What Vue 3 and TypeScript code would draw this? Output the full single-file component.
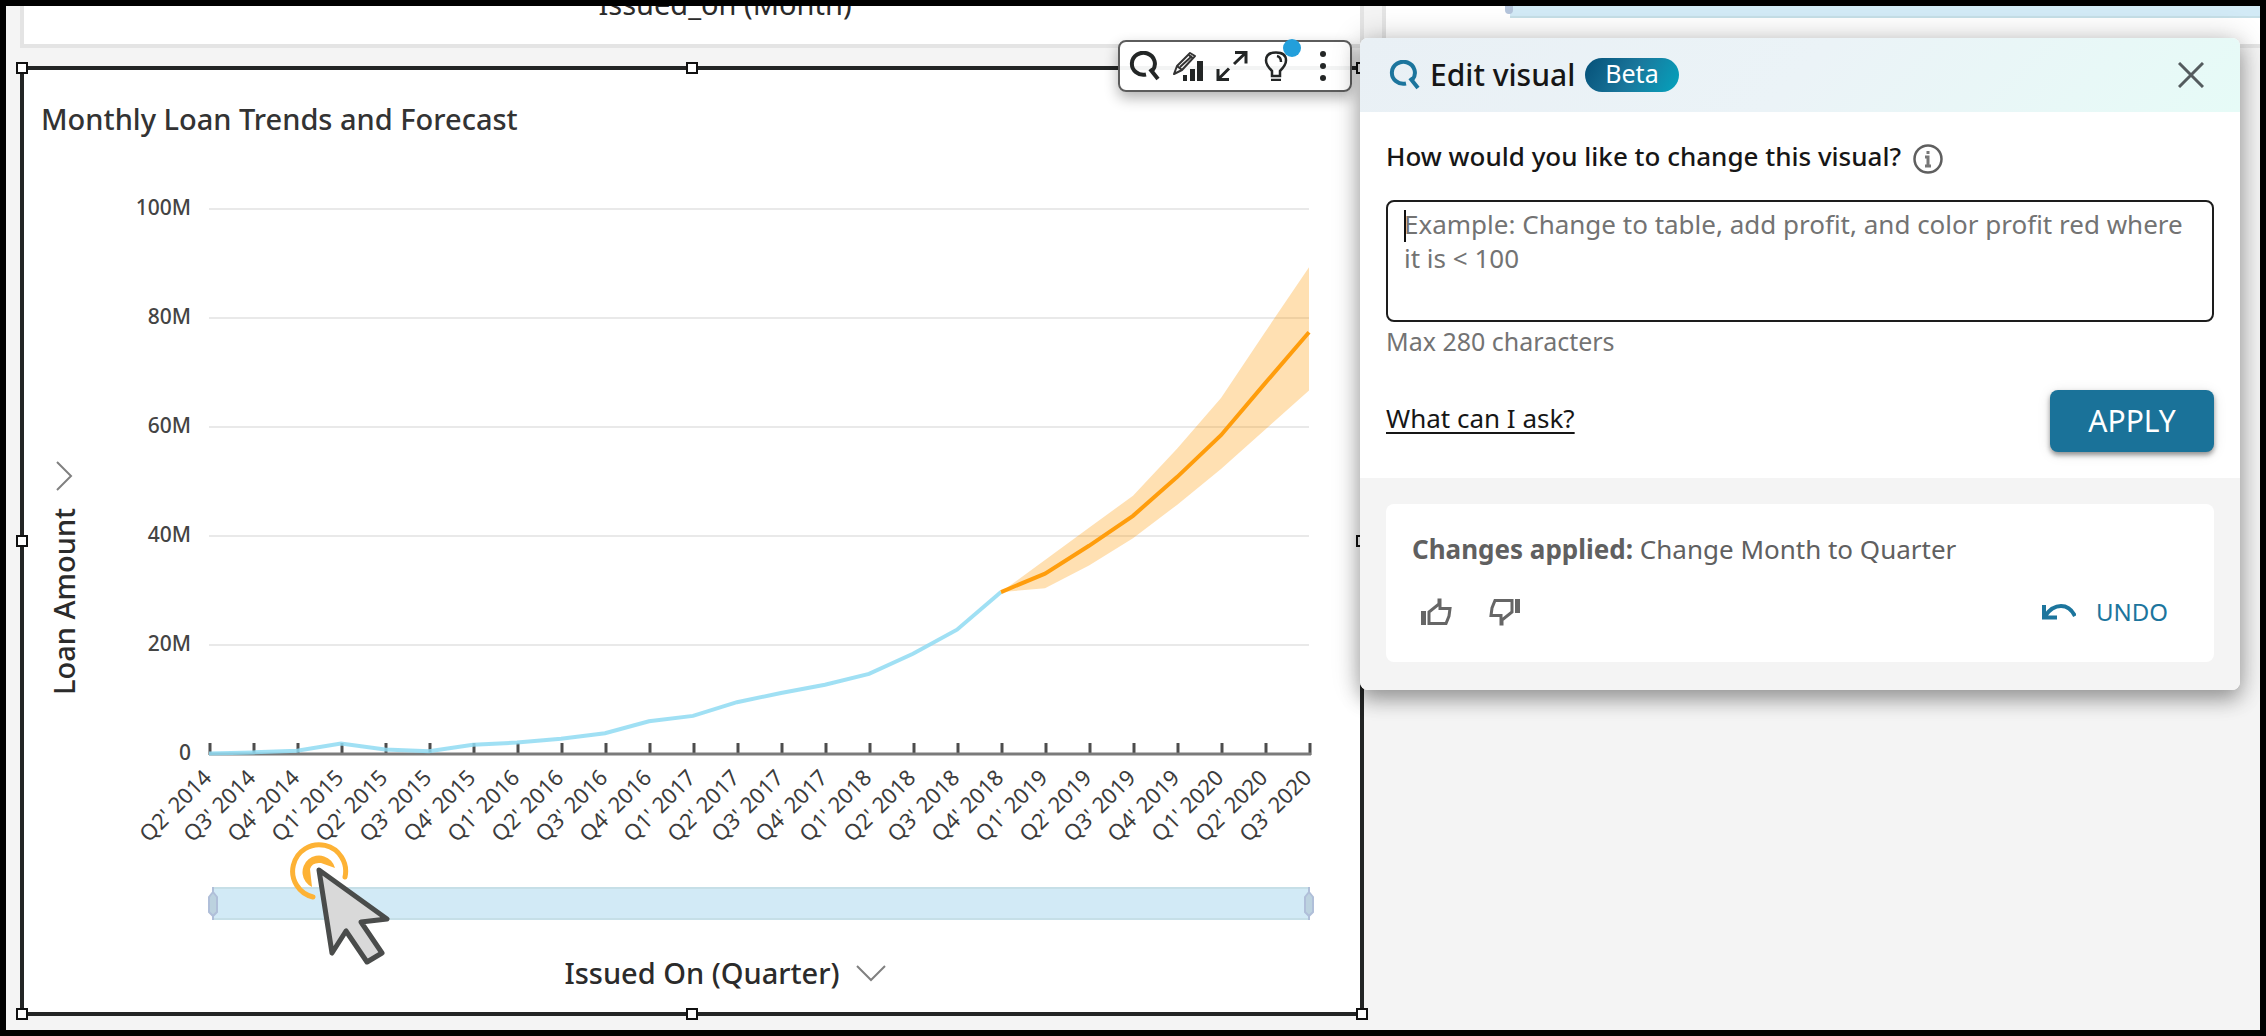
<script setup lang="ts">
import { ref } from 'vue'

interface Point { x: number; y: number }

const AXIS_LEFT = 209
const AXIS_RIGHT = 1309
const AXIS_BOTTOM = 754
const STEP = 44
const PX_PER_MILLION = 5.45

const years = [2014, 2015, 2016, 2017, 2018, 2019, 2020]
const quarters: string[] = years
  .flatMap((year) => [1, 2, 3, 4].map((q) => `Q${q}' ${year}`))
  .slice(1, 27)

const ticks = quarters.map((label, i) => ({ label, x: AXIS_LEFT + i * STEP }))
const grid = [0, 20, 40, 60, 80, 100].map((value) => ({
  label: value === 0 ? '0' : `${value}M`,
  y: AXIS_BOTTOM - value * PX_PER_MILLION,
}))

/* Loan amounts in millions, one per quarter. */
const actual = [0.1, 0.3, 0.6, 1.9, 0.8, 0.5, 1.7, 2.1, 2.8, 3.8, 6, 7, 9.5, 11.2, 12.7, 14.7, 18.4, 22.8, 29.7]
const forecast = [29.7, 33.1, 38.2, 43.7, 50.8, 58.5, 68, 77.4]
const upper = [29.7, 35.6, 41.5, 47.4, 56, 65.3, 77.4, 89.3]
const lower = [29.7, 30.4, 34.6, 39.6, 45.7, 52.3, 59.5, 66.7]
const FORECAST_START = actual.length - 1

function toPoints(values: number[], start: number): Point[] {
  return values.map((v, i) => ({ x: AXIS_LEFT + (start + i) * STEP, y: AXIS_BOTTOM - v * PX_PER_MILLION }))
}
function join(points: Point[]): string {
  return points.map((p) => `${p.x},${p.y.toFixed(1)}`).join(' ')
}

const actualLine = join(toPoints(actual, 0))
const forecastLine = join(toPoints(forecast, FORECAST_START))
const band = join([...toPoints(upper, FORECAST_START), ...toPoints(lower, FORECAST_START).reverse()])

const handles = ['tl', 'tc', 'tr', 'ml', 'mr', 'bl', 'bc', 'br']
const request = ref('')
</script>

<template>
  <main class="sheet">
    <section class="card above-left">
      <span class="axis-title">Issued_on (Month)</span>
    </section>
    <section class="card above-right">
      <div class="range-peek"><i class="range-grip"></i></div>
    </section>

    <section class="visual">
      <h2 class="visual-title">Monthly Loan Trends and Forecast</h2>
      <div class="plot-row">
        <button class="axis-title axis-y" type="button">
          Loan Amount
          <svg class="chev-y" width="18" height="30" viewBox="0 0 18 30" aria-hidden="true">
            <path d="M16 1 2 15l14 14" fill="none" stroke="#808080" stroke-width="2" />
          </svg>
        </button>
        <svg class="plot" viewBox="100 138 1240 798" role="img" aria-label="Loan amount by quarter with forecast">
          <g class="y-label">
            <text v-for="g in grid" :key="g.label" x="191" :y="g.y + 6" text-anchor="end">{{ g.label }}</text>
          </g>
          <g stroke="#e9e9e9" stroke-width="2">
            <line v-for="g in grid.slice(1)" :key="g.label" :x1="AXIS_LEFT" :x2="AXIS_RIGHT" :y1="g.y" :y2="g.y" />
          </g>
          <polygon :points="band" fill="#ff9900" fill-opacity="0.3" />
          <g stroke="#4d4d4d" stroke-width="3">
            <line v-for="t in ticks" :key="t.label" :x1="t.x + 1" :x2="t.x + 1" y1="743" y2="755" />
          </g>
          <line :x1="AXIS_LEFT" :x2="AXIS_RIGHT + 2" y1="754" y2="754" stroke="#7b7b7b" stroke-width="3" />
          <polyline :points="actualLine" fill="none" stroke="#8fdaf2" stroke-opacity="0.85" stroke-width="4" />
          <polyline :points="forecastLine" fill="none" stroke="#ff9d0c" stroke-width="4" />
          <g class="x-label">
            <text
              v-for="t in ticks" :key="t.label" text-anchor="end"
              :transform="`translate(${t.x + 4} 779) rotate(-45)`"
            >{{ t.label }}</text>
          </g>
          <rect x="212" y="887" width="1097" height="33" fill="#d2eaf6" />
          <path d="M212 888H1309M212 919H1309" stroke="#c6dfe7" stroke-width="2" />
          <g fill="#bcd2df" stroke="#b0bfd9" stroke-width="2">
            <path d="M213 887v5l-4 5v15l4 4v4v-4l4-4v-15l-4-5z" />
            <path d="M1309 887v5l-4 5v15l4 4v4v-4l4-4v-15l-4-5z" />
          </g>
        </svg>
      </div>
      <button class="axis-title axis-x" type="button">
        Issued On (Quarter)
        <svg width="30" height="18" viewBox="0 0 30 18" aria-hidden="true">
          <path d="M1 2l14 14L29 2" fill="none" stroke="#808080" stroke-width="2" />
        </svg>
      </button>

      <i v-for="h in handles" :key="h" class="handle" :class="h"></i>

      <svg class="pointer" width="100" height="130" viewBox="290 838 100 130" aria-hidden="true">
        <path d="M345 876A26.500 26.500 0 1 0 313 896" fill="none" stroke="#fdb235" stroke-width="5" stroke-linecap="round" />
        <path d="M335 867A16.500 16.500 0 1 0 312 886L310 868Q312 861 321 862Z" fill="#fdb235" />
        <path
          d="M319 869L387 918L361 921L382 952L367 961L346 930L332 952Z"
          fill="#d9d9d9" stroke="#4a4c4b" stroke-width="5" stroke-linejoin="round"
        />
      </svg>

      <div class="toolbar" role="toolbar" aria-label="Visual actions">
        <button type="button" aria-label="Ask Q">
          <svg width="32" height="30" viewBox="0 0 32 30"><path d="M18 23.500A11.500 11 0 1 1 24.500 19.500M22 18L30 28" fill="none" stroke="#232626" stroke-width="4" /></svg>
        </button>
        <button type="button" aria-label="Edit visual">
          <svg width="32" height="30" viewBox="0 0 32 30">
            <path d="M2 23l3-8L18 2l5 3-13 14zM17 4l4 4M5 15l5 4M8 16L20 5" fill="none" stroke="#333" stroke-width="2" stroke-linejoin="round" />
            <path d="M11 24h4v6h-4zM18 18h5v12h-5zM25 10h6v20h-6z" fill="#232626" />
          </svg>
        </button>
        <button type="button" aria-label="Maximize">
          <svg width="32" height="30" viewBox="0 0 32 30"><path d="M19 1.500h11v11M30 1.500L18 13M2 18v10.500h11M2 28.500l11-11" fill="none" stroke="#232626" stroke-width="3" /></svg>
        </button>
        <button type="button" aria-label="Insights">
          <svg width="24" height="30" viewBox="0 0 24 30">
            <path d="M8 25V20Q2 14 2 9.500C2 4 6 1.500 12 1.500S22 4 22 9.500Q22 14 16 20V25Z" fill="none" stroke="#232626" stroke-width="2.500" />
            <path d="M13 5q4 1 4 6M7 29h10" fill="none" stroke="#232626" stroke-width="2.500" />
          </svg>
          <i class="badge"></i>
        </button>
        <button class="more" type="button" aria-label="More">
          <svg width="8" height="30" viewBox="0 0 8 30" fill="#232626"><circle cx="4" cy="3" r="3" /><circle cx="4" cy="15" r="3" /><circle cx="4" cy="27" r="3" /></svg>
        </button>
      </div>
    </section>

    <aside class="panel">
      <header class="panel-head">
        <svg width="32" height="30" viewBox="0 0 32 30" aria-hidden="true"><path d="M18 23.500A11.500 11 0 1 1 24.500 19.500M22 18L30 28" fill="none" stroke="#1c759d" stroke-width="4" /></svg>
        <h2>Edit visual</h2>
        <span class="beta">Beta</span>
        <button class="close" type="button" aria-label="Close">
          <svg width="26" height="26" viewBox="0 0 26 26"><path d="M1 1l24 24M25 1L1 25" stroke="#545b5e" stroke-width="3" /></svg>
        </button>
      </header>

      <form class="panel-body" @submit.prevent>
        <div class="question">
          <label for="request">How would you like to change this visual?</label>
          <svg width="30" height="30" viewBox="0 0 30 30" aria-hidden="true">
            <circle cx="15" cy="15" r="13.500" fill="none" stroke="#5f5f5f" stroke-width="2.500" />
            <path d="M15 7v3M12 13h3v9M12 22h6" fill="none" stroke="#777" stroke-width="3" />
          </svg>
        </div>
        <div class="field">
          <textarea
            id="request" v-model="request" maxlength="280"
            placeholder="Example: Change to table, add profit, and color profit red where it is < 100"
          ></textarea>
          <i class="caret"></i>
        </div>
        <p class="hint">Max 280 characters</p>
        <div class="actions">
          <a href="#">What can I ask?</a>
          <button class="apply" type="submit">APPLY</button>
        </div>
      </form>

      <footer class="panel-foot">
        <div class="result">
          <p><strong>Changes applied:</strong> Change Month to Quarter</p>
          <div class="feedback">
            <button type="button" aria-label="Good response">
              <svg width="32" height="28" viewBox="0 0 32 28" fill="none" stroke="#666">
                <path d="M3.500 13v14" stroke-width="5" />
                <path d="M9 25.500V14L19 6V2L20 2V10.500H30L29 18L26 25.500Z" stroke-width="3" />
              </svg>
            </button>
            <button type="button" aria-label="Bad response">
              <svg width="32" height="28" viewBox="0 0 32 28" fill="none" stroke="#666">
                <path d="M28.500 1v14" stroke-width="5" />
                <path d="M23 2.500V14L13 22V26L12 26V17.500H2L3 10L6 2.500Z" stroke-width="3" />
              </svg>
            </button>
            <button class="undo" type="button">
              <svg width="34" height="18" viewBox="0 0 34 18" fill="none" stroke="#1c759d" stroke-width="4">
                <path d="M2 2v12.500h13M3 13Q10 3 19 3Q28 3 33 13" />
              </svg>
              UNDO
            </button>
          </div>
        </div>
      </footer>
    </aside>
  </main>
</template>

<style>
body { margin: 0; }
</style>

<style scoped>
.sheet {
  position: relative;
  box-sizing: border-box;
  min-height: 100vh;
  border: 6px solid #000;
  padding: 0 0 14px 14px;
  background: #f4f4f4;
  display: grid;
  grid-template-columns: 1344fr 878fr;
  grid-template-rows: 42px auto;
  gap: 18px;
  align-content: start;
  overflow: hidden;
  font-family: "Noto Sans", sans-serif;
  font-size: 26px;
  line-height: 34px;
  color: #161616;
}
h2, p { margin: 0; font-weight: 400; }
button {
  border: 0;
  padding: 0;
  background: none;
  font: inherit;
  color: inherit;
  cursor: pointer;
}
svg { display: block; flex: none; }

.card {
  box-sizing: border-box;
  background: #fff;
  border: 4px solid #e4e4e4;
  border-top: 0;
  overflow: hidden;
}
.above-left {
  display: flex;
  align-items: flex-end;
  justify-content: center;
  padding: 0 0 20px 66px;
}
.above-right { border-right: 0; padding-left: 124px; }
.range-peek {
  position: relative;
  height: 10px;
  background: #d2eaf6;
  border-bottom: 2px solid #c6dfe7;
}
.range-grip {
  position: absolute;
  left: -5px;
  top: 0;
  width: 8px;
  height: 8px;
  border-radius: 0 0 4px 4px;
  background: #b4c4db;
}
.axis-title { font-size: 29px; line-height: 40px; color: #2b2b2b; }
button.axis-title { font-weight: 500; }

.visual {
  position: relative;
  box-sizing: border-box;
  background: #fff;
  border: 4px solid #232525;
  padding: 28px 0 19px;
}
.visual-title { padding-left: 17px; font-size: 29px; font-weight: 500; line-height: 42px; color: #333; }
.plot-row { display: flex; padding-right: 20px; margin-top: -2px; }
.axis-y {
  box-sizing: border-box;
  width: 76px;
  padding: 0 4px 82px 0;
  writing-mode: vertical-rl;
  transform: rotate(180deg);
  display: flex;
  align-items: center;
  justify-content: center;
  gap: 16px;
}
.plot { flex: 1; min-width: 0; height: auto; }
.y-label { font-size: 21px; font-weight: 500; fill: #444; }
.x-label { font-size: 22px; fill: #3c3c3c; }
.axis-x {
  display: flex;
  align-items: center;
  justify-content: center;
  gap: 16px;
  width: 100%;
  margin-top: 17px;
  padding-left: 66px;
  box-sizing: border-box;
}

.handle {
  position: absolute;
  box-sizing: border-box;
  width: 12px;
  height: 12px;
  margin: -6px;
  border: 2px solid #111;
  background: #fff;
}
.tl, .tc, .tr { top: -2px; }
.ml, .mr { top: 50%; }
.bl, .bc, .br { bottom: -2px; }
.tl, .ml, .bl { left: -2px; }
.tc, .bc { left: 50%; }
.tr, .mr, .br { right: -2px; }

.pointer { position: absolute; left: 266px; top: 769px; }

.toolbar {
  position: absolute;
  top: -30px;
  right: 8px;
  display: flex;
  padding: 0 2px;
  border: 2px solid #5c5c5c;
  border-radius: 8px;
  background: rgba(255, 255, 255, 0.95);
  box-shadow: 0 6px 14px rgba(0, 0, 0, 0.3);
}
.toolbar button {
  position: relative;
  display: flex;
  align-items: center;
  justify-content: center;
  width: 44px;
  height: 48px;
}
.toolbar .more { width: 50px; }
.badge {
  position: absolute;
  left: 29px;
  top: -3px;
  width: 18px;
  height: 18px;
  border-radius: 50%;
  background: #239fdb;
}

.panel {
  position: absolute;
  top: 32px;
  right: 20px;
  width: 880px;
  border-radius: 8px;
  background: #fff;
  box-shadow: 0 10px 20px rgba(0, 0, 0, 0.3), 0 0 30px rgba(0, 0, 0, 0.2);
}
.panel-head {
  display: flex;
  align-items: center;
  height: 74px;
  padding: 0 36px 0 28px;
  border-radius: 8px 8px 0 0;
  background: linear-gradient(135deg, #e9f0f5, #ebf3f7 50%, #e6fbf7);
}
.panel-head h2 { margin: 0 10px; font-size: 30px; font-weight: 500; line-height: 40px; }
.beta {
  padding: 0 20px 4px;
  border-radius: 17px;
  background: linear-gradient(120deg, #055078, #1a779c 50%, #04a3bd);
  color: #fff;
  font-size: 25px;
  line-height: 30px;
}
.close { margin-left: auto; }

.panel-body { padding: 26px; }
.question { display: flex; align-items: center; gap: 12px; height: 36px; margin-bottom: 26px; }
.question label { font-weight: 500; }
.question svg { margin-top: 6px; }
.field { position: relative; }
textarea {
  display: block;
  box-sizing: border-box;
  width: 100%;
  height: 122px;
  padding: 5px 16px;
  border: 2px solid #1d1d1d;
  border-radius: 8px;
  outline: none;
  resize: none;
  background: #fff;
  font: inherit;
  color: inherit;
}
textarea::placeholder { color: #737373; opacity: 1; }
.caret {
  position: absolute;
  left: 18px;
  top: 10px;
  width: 2px;
  height: 32px;
  background: #111;
}
.hint { margin-top: 2px; font-size: 25px; color: #737373; }
.actions { display: flex; align-items: center; justify-content: space-between; margin-top: 32px; }
.actions a {
  padding-bottom: 6px;
  color: #161616;
  text-decoration: underline;
  text-decoration-thickness: 2px;
  text-underline-offset: 4px;
}
.apply {
  width: 164px;
  height: 62px;
  border-radius: 8px;
  background: #1a7299;
  color: #fff;
  font-size: 30px;
  box-shadow: 0 3px 5px rgba(0, 0, 0, 0.4), 0 2px 14px rgba(0, 0, 0, 0.1);
}

.panel-foot { padding: 26px 26px 28px; border-radius: 0 0 8px 8px; background: #f4f4f4; }
.result { padding: 28px 46px 34px 26px; border-radius: 8px; background: #fff; color: #606060; }
.result strong { font-weight: 700; }
.feedback { display: flex; align-items: center; gap: 21px; height: 32px; margin-top: 30px; }
.feedback button { display: flex; justify-content: center; width: 48px; }
.feedback .undo {
  align-items: center;
  gap: 20px;
  width: auto;
  margin-left: auto;
  color: #1c759d;
  font-size: 24px;
}
</style>
